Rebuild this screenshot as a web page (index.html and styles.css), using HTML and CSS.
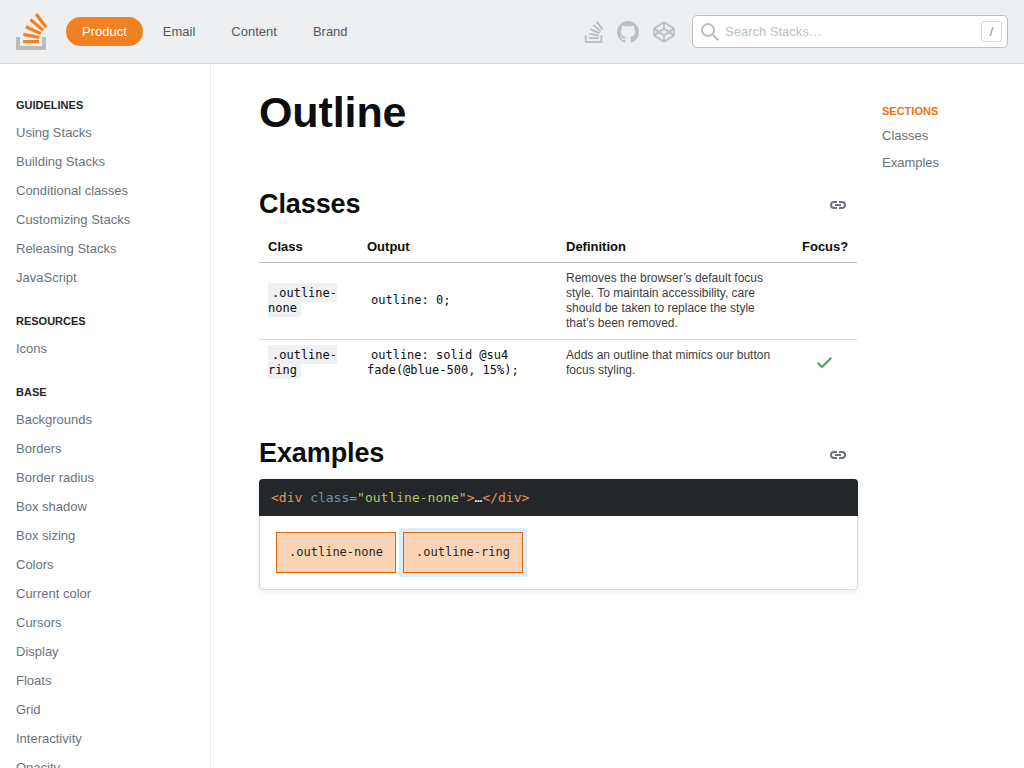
FILE: index.html
```html
<!DOCTYPE html>
<html lang="en">
<head>
<meta charset="utf-8">
<title>Outline - Stacks</title>
<link rel="stylesheet" href="styles.css">
</head>
<body>
<header class="topbar">
  <a class="logo"><svg width="32" height="37" viewBox="0 0 32 37"><path d="M26 33v-9h4v13H0V24h4v9h22Z" fill="#BCBBBB"/><path d="m21.5 0-2.7 2 9.9 13.3 2.7-2L21.5 0ZM26 18.4 13.3 7.8l2.1-2.5 12.7 10.6-2.1 2.5ZM9.1 15.2l15 7 1.4-3-15-7-1.4 3Zm14 10.79.68-2.95-16.1-3.35L7 23l16.1 2.99ZM23 30H7v-3h16v3Z" fill="#F48024"/></svg></a>
  <nav class="nav">
    <a class="nav-item is-selected">Product</a><a class="nav-item">Email</a><a class="nav-item">Content</a><a class="nav-item">Brand</a>
  </nav>
  <div class="links">
    <svg width="22" height="22" viewBox="0 0 24 24"><path d="M15.725 0l-1.72 1.277 6.39 8.588 1.716-1.277L15.725 0zm-3.94 3.418l-1.369 1.644 8.225 6.85 1.369-1.644-8.225-6.85zm-3.15 4.465l-.905 1.94 9.702 4.517.904-1.94-9.701-4.517zm-1.85 4.86l-.44 2.093 10.473 2.201.44-2.092-10.473-2.203zM1.89 15.47V24h19.19v-8.53h-2.133v6.397H4.021v-6.4H1.89zm4.265 2.133v2.13h10.66v-2.13H6.154Z"/></svg>
    <svg width="22" height="22" viewBox="0 0 16 16"><path d="M8 0C3.58 0 0 3.58 0 8c0 3.54 2.29 6.53 5.47 7.59.4.07.55-.17.55-.38 0-.19-.01-.82-.01-1.49-2.01.37-2.53-.49-2.69-.94-.09-.23-.48-.94-.82-1.13-.28-.15-.68-.52-.01-.53.63-.01 1.08.58 1.23.82.72 1.21 1.87.87 2.33.66.07-.52.28-.87.51-1.07-1.78-.2-3.64-.89-3.64-3.95 0-.87.31-1.59.82-2.15-.08-.2-.36-1.02.08-2.12 0 0 .67-.21 2.2.82.64-.18 1.32-.27 2-.27s1.36.09 2 .27c1.53-1.04 2.2-.82 2.2-.82.44 1.1.16 1.92.08 2.12.51.56.82 1.27.82 2.15 0 3.07-1.87 3.75-3.65 3.95.29.25.54.73.54 1.48 0 1.07-.01 1.93-.01 2.2 0 .21.15.46.55.38A8.01 8.01 0 0 0 16 8c0-4.42-3.58-8-8-8Z"/></svg>
    <svg class="stroked" width="22" height="22" viewBox="0 0 22 22"><path d="M11 1.3 20.9 7.6v6.8L11 20.7 1.1 14.4V7.6L11 1.3ZM11 1.3v6M11 14.7v6M1.2 7.6 11 14.4l9.8-6.8M1.2 14.4 11 7.6l9.8 6.8"/></svg>
  </div>
  <div class="search">
    <svg width="18" height="18" viewBox="0 0 18 18"><path d="m18 16.5-5.14-5.18h-.35a7 7 0 1 0-1.19 1.19v.35L16.5 18l1.5-1.5ZM12 7A5 5 0 1 1 2 7a5 5 0 0 1 10 0Z"/></svg>
    <span class="placeholder">Search Stacks…</span>
    <span class="key">/</span>
  </div>
</header>
<div class="page">
  <aside class="sidebar">
    <h6>Guidelines</h6>
    <a>Using Stacks</a><a>Building Stacks</a><a>Conditional classes</a><a>Customizing Stacks</a><a>Releasing Stacks</a><a>JavaScript</a>
    <h6>Resources</h6>
    <a>Icons</a>
    <h6>Base</h6>
    <a>Backgrounds</a><a>Borders</a><a>Border radius</a><a>Box shadow</a><a>Box sizing</a><a>Colors</a><a>Current color</a><a>Cursors</a><a>Display</a><a>Floats</a><a>Grid</a><a>Interactivity</a><a>Opacity</a>
  </aside>
  <main class="content">
    <h1>Outline</h1>
    <div class="section-head"><h2>Classes</h2><svg class="anchor" width="16" height="8" viewBox="0 0 16 8"><path d="M7 1H4a3 3 0 0 0 0 6h3M9 1h3a3 3 0 0 1 0 6H9M5 4h6"/></svg></div>
    <table>
      <colgroup><col class="c-class"><col class="c-output"><col class="c-def"><col class="c-focus"></colgroup>
      <thead><tr><th>Class</th><th>Output</th><th>Definition</th><th>Focus?</th></tr></thead>
      <tbody>
        <tr><td class="mono"><code class="tag">.outline-none</code></td><td class="mono"><code>outline: 0;</code></td><td>Removes the browser’s default focus style. To maintain accessibility, care should be taken to replace the style that’s been removed.</td><td></td></tr>
        <tr><td class="mono"><code class="tag">.outline-ring</code></td><td class="mono"><code>outline: solid @su4 fade(@blue-500, 15%);</code></td><td>Adds an outline that mimics our button focus styling.</td><td class="check"><svg width="18" height="18" viewBox="0 0 18 18"><path d="M16 4.41 14.59 3 6 11.59 2.41 8 1 9.41l5 5 10-10Z"/></svg></td></tr>
      </tbody>
    </table>
    <div class="section-head examples-head"><h2>Examples</h2><svg class="anchor" width="16" height="8" viewBox="0 0 16 8"><path d="M7 1H4a3 3 0 0 0 0 6h3M9 1h3a3 3 0 0 1 0 6H9M5 4h6"/></svg></div>
    <div class="preview">
      <pre><span class="t">&lt;div</span> <span class="a">class=</span><span class="s">"outline-none"</span><span class="t">&gt;</span>…<span class="t">&lt;/div&gt;</span></pre>
      <div class="demo"><div class="box">.outline-none</div><div class="box ring">.outline-ring</div></div>
    </div>
  </main>
  <aside class="toc">
    <h6>Sections</h6>
    <a>Classes</a><a>Examples</a>
  </aside>
</div>
</body>
</html>
```
FILE: styles.css
```css
* { box-sizing: border-box; }
body {
  margin: 0;
  height: 768px;
  overflow: hidden;
  display: flex;
  flex-direction: column;
  background: #fff;
  color: #0c0d0e;
  font: 13px/17px "Liberation Sans", Arial, sans-serif;
}
h1, h2, h6, pre { margin: 0; }
svg { display: block; flex: none; }

.topbar {
  flex: none;
  height: 64px;
  display: flex;
  align-items: center;
  padding: 0 16px;
  background: #eeeff1;
  border-bottom: 1px solid #d6d9dc;
}
.logo { margin-right: 18px; }
.nav { display: flex; gap: 4px; }
.nav-item {
  padding: 6px 16px;
  border-radius: 15px;
  color: #525960;
}
.nav-item.is-selected { background: #f48024; color: #fff; }
.links {
  display: flex;
  gap: 14px;
  margin-left: auto;
  margin-right: 17px;
  padding-top: 1px;
  fill: #bbc0c4;
}
.links svg:first-child { margin-right: -2px; }
.stroked { fill: none; stroke: #bbc0c4; stroke-width: 1.9; stroke-linejoin: round; }
.search {
  width: 316px;
  height: 33px;
  display: flex;
  align-items: center;
  padding: 0 5px 0 8px;
  background: #fff;
  border: 1px solid #bbc0c4;
  border-radius: 5px;
  fill: #bbc0c4;
}
.placeholder { flex: 1; margin-left: 6px; color: #bbc0c4; }
.key {
  width: 21px;
  height: 21px;
  border: 1px solid #d6d9dc;
  border-radius: 3px;
  text-align: center;
  line-height: 20px;
  color: #848d95;
}

.page { display: flex; flex: 1; min-height: 0; }
.sidebar {
  width: 211px;
  flex: none;
  overflow: hidden;
  padding: 33px 16px 0;
  border-right: 1px solid #e4e6e8;
}
h6 { font-size: 11px; line-height: 17px; text-transform: uppercase; color: #242729; }
.sidebar h6 { margin-bottom: 4px; }
.sidebar a + h6 { margin-top: 21px; }
.sidebar a { display: block; padding: 6px 0; color: #6a737c; }

.content { width: 599px; flex: none; margin-left: 48px; padding-top: 20px; }
h1 { font-size: 43px; line-height: 56px; letter-spacing: -0.1px; }
.section-head {
  display: flex;
  justify-content: space-between;
  align-items: center;
  height: 35px;
  margin-top: 46px;
  padding-right: 12px;
}
h2 { font-size: 27px; line-height: 35px; padding-top: 2px; letter-spacing: -0.1px; }
.anchor { margin-top: 3px; fill: none; stroke: #6a737c; stroke-width: 2; }

table {
  width: 598px;
  table-layout: fixed;
  margin-top: 9px;
  border-collapse: separate;
  border-spacing: 0;
  font-size: 12px;
  line-height: 15px;
}
.c-class { width: 99px; }
.c-output { width: 199px; }
.c-def { width: 236px; }
.c-focus { width: 64px; }
th {
  height: 33px;
  padding: 1px 9px 0;
  text-align: left;
  white-space: nowrap;
  font-size: 13px;
  border-bottom: 1px solid #bbc0c4;
}
td { padding: 8px 9px; color: #3b4045; }
tbody tr:first-child td { border-bottom: 1px solid #d6d9dc; }
td:first-child { padding-right: 8px; }
td.mono { padding-top: 7px; padding-bottom: 9px; }
code, pre, .box { font-family: "DejaVu Sans Mono", monospace; }
code { font-size: 12px; padding: 2.5px 4px; color: #0c0d0e; }
.tag { background: #eff0f1; border-radius: 3px; }
.check { padding-left: 23px; fill: #48a868; }

.examples-head { margin-top: 50px; }
.examples-head h2 { padding-top: 0; }
.preview {
  margin-top: 8px;
  height: 111px;
  border: 1px solid #d6d9dc;
  border-radius: 4px;
  box-shadow: 0 2px 6px rgba(12, 13, 14, .08);
}
pre {
  margin: -1px -1px 0;
  height: 37px;
  padding: 0 12px;
  border-radius: 4px 4px 0 0;
  background: #242729;
  color: #fff;
  font-size: 13px;
  line-height: 38px;
}
.t { color: #e7935b; }
.a { color: #7292b0; }
.s { color: #b8c565; }
.demo { display: flex; gap: 7px; padding: 16px; }
.box {
  width: 120px;
  height: 41px;
  border: 1px solid #da680b;
  background: #fbd3b5;
  color: #242729;
  font-size: 12px;
  line-height: 39px;
  text-align: center;
}
.ring { box-shadow: 0 0 0 4px rgba(0, 149, 255, .15); }

.toc { margin-left: 24px; padding-top: 39px; }
.toc h6 { color: #f2720c; margin-bottom: 2px; }
.toc a { display: block; padding: 5px 0; color: #6a737c; }
```
